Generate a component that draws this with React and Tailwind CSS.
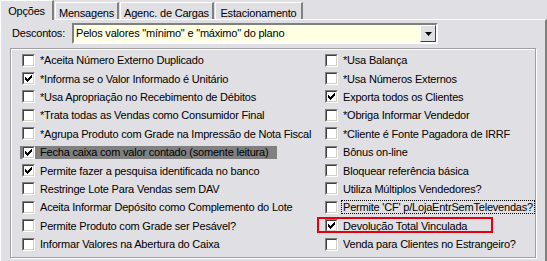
import React from 'react';

const left = [
  { label: '*Aceita Número Externo Duplicado' },
  { label: '*Informa se o Valor Informado é Unitário', checked: true },
  { label: '*Usa Apropriação no Recebimento de Débitos' },
  { label: '*Trata todas as Vendas como Consumidor Final' },
  { label: '*Agrupa Produto com Grade na Impressão de Nota Fiscal' },
  { label: 'Fecha caixa com valor contado (somente leitura)', checked: true, readOnly: true },
  { label: 'Permite fazer a pesquisa identificada no banco', checked: true },
  { label: 'Restringe Lote Para Vendas sem DAV' },
  { label: 'Aceita Informar Depósito como Complemento do Lote' },
  { label: 'Permite Produto com Grade ser Pesável?' },
  { label: 'Informar Valores na Abertura do Caixa' },
];

const right = [
  { label: '*Usa Balança' },
  { label: '*Usa Números Externos' },
  { label: 'Exporta todos os Clientes', checked: true },
  { label: '*Obriga Informar Vendedor' },
  { label: '*Cliente é Fonte Pagadora de IRRF' },
  { label: 'Bônus on-line' },
  { label: 'Bloquear referência básica' },
  { label: 'Utiliza Múltiplos Vendedores?' },
  { label: "Permite 'CF' p/LojaEntrSemTelevendas?", focused: true },
  { label: 'Devolução Total Vinculada', checked: true, marked: true },
  { label: 'Venda para Clientes no Estrangeiro?' },
];

// other tabs with fixed widths as in the original form
const tabs = [
  { label: 'Mensagens', w: 'w-[64px]' },
  { label: 'Agenc. de Cargas', w: 'w-[94px]' },
  { label: 'Estacionamento', w: 'w-[88px]' },
];

function Check({ checked }) {
  return (
    <div className="w-[13px] h-[13px] shrink-0 border border-t-[#808080] border-l-[#808080] border-b-white border-r-white">
      <div className="w-full h-full bg-white border border-t-[#404040] border-l-[#404040] border-b-[#d4d0c8] border-r-[#d4d0c8]">
        {checked && (
          <svg width="9" height="9" viewBox="0 0 9 9" shapeRendering="crispEdges" className="block">
            <path d="M7 1h1v3h-1zM6 2h1v3h-1zM5 3h1v3h-1zM4 4h1v3h-1zM3 5h1v3h-1zM2 4h1v3h-1zM1 3h1v3h-1z" fill="#000" />
          </svg>
        )}
      </div>
    </div>
  );
}

function Option({ item }) {
  return (
    <div className="relative h-[18.4px] flex items-center">
      <div className={`flex items-center h-[13px] pl-[2px] ${item.readOnly ? 'w-[257px] bg-[#808080]' : ''}`}>
        <Check checked={item.checked} />
        <span
          className={`whitespace-nowrap leading-[12px] ${item.focused ? 'ml-[4px] px-[1px] outline outline-1 outline-dotted outline-black' : 'ml-[5px]'}`}
        >
          {item.label}
        </span>
      </div>
      {item.marked && (
        <div className="absolute left-[-6px] top-[0px] w-[176px] h-[16px] border-2 border-[#e3000f]" />
      )}
    </div>
  );
}

export default function App() {
  return (
    <div
      className="w-[547px] h-[261px] bg-[#e0dfe3] overflow-hidden text-[11px] tracking-[-0.2px] text-black"
      style={{ fontFamily: '"Liberation Sans", Arial, sans-serif' }}
    >
      {/* tab strip */}
      <div className="flex items-end h-[19px]">
        <div className="relative z-10 w-[54px] h-[20px] -mb-px pt-[2px] text-center bg-[#e0dfe3] border-t border-l border-white border-r-2 border-r-[#808080]">
          Opções
        </div>
        {tabs.map((t) => (
          <div
            key={t.label}
            className={`${t.w} h-[17px] ml-[1px] pt-[2px] text-center whitespace-nowrap border-t border-l border-white border-r-2 border-r-[#808080]`}
          >
            {t.label}
          </div>
        ))}
      </div>

      {/* tab page */}
      <div className="h-[242px] border-t border-l border-white border-r-2 border-r-[#808080] w-[547px] pl-[11px]">
        <div className="flex items-center mt-[3px] h-[21px]">
          <span className="w-[60px]">Descontos:</span>
          <div className="w-[366px] h-[21px] flex items-center bg-[#ffffe1] border-2 border-t-[#808080] border-l-[#808080] border-b-white border-r-white">
            <span className="flex-1 pl-[2px] whitespace-nowrap">Pelos valores "mínimo" e "máximo" do plano</span>
            <div className="w-[16px] h-[17px] bg-[#e0dfe3] border border-t-white border-l-white border-b-[#404040] border-r-[#404040] flex items-center justify-center">
              <svg width="7" height="4" viewBox="0 0 7 4">
                <path d="M0 0h7L3.5 4z" fill="#000" />
              </svg>
            </div>
          </div>
        </div>

        {/* group box */}
        <div className="mt-[4px] -ml-[2px] w-[526px] h-[210px] border border-[#a0a0a0] shadow-[inset_1px_1px_0_#fff,1px_1px_0_#fff] pl-[9px] pt-[2px] grid grid-cols-[303px_1fr]">
          <div className="flex flex-col">
            {left.map((it) => (
              <Option key={it.label} item={it} />
            ))}
          </div>
          <div className="flex flex-col">
            {right.map((it) => (
              <Option key={it.label} item={it} />
            ))}
          </div>
        </div>
      </div>
    </div>
  );
}
